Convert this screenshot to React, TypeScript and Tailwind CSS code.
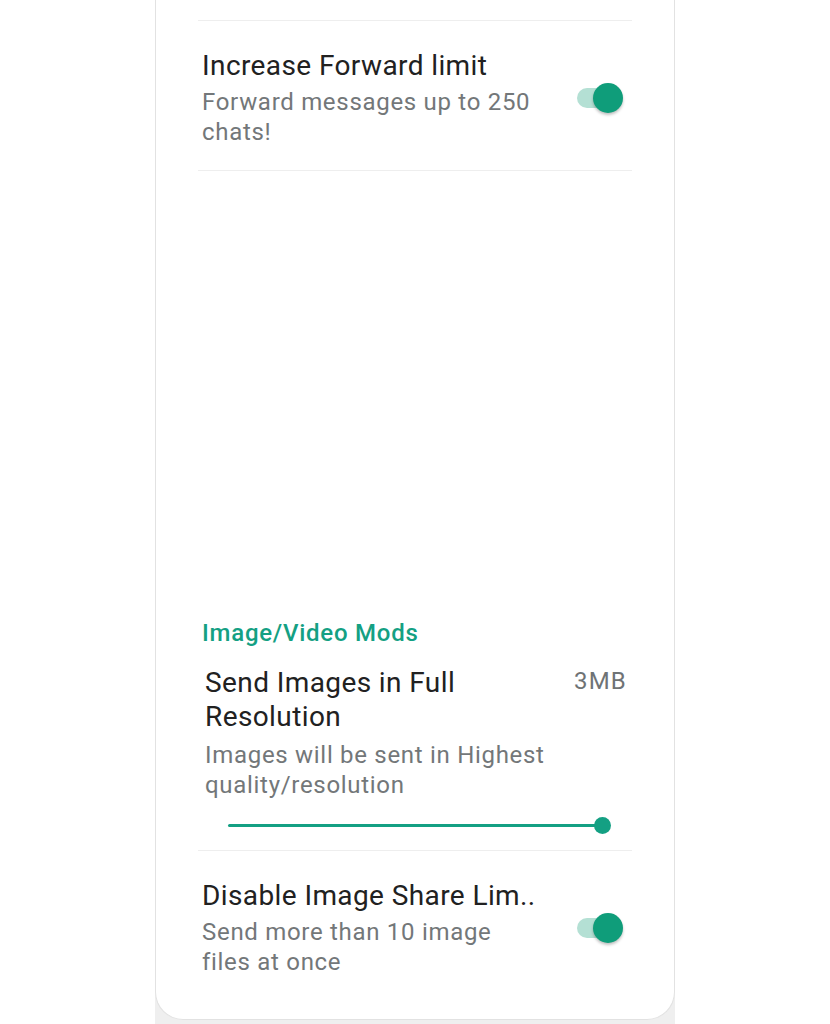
import React from 'react';

const font = { fontFamily: 'Roboto, "Noto Sans", sans-serif' };

function Toggle() {
  return (
    <div className="relative w-[46px] h-[32px] flex items-center shrink-0">
      <div className="w-[40px] h-[20px] rounded-full bg-[#b4e0d4]" />
      <div className="absolute right-0 top-[1px] w-[30px] h-[30px] rounded-full bg-[#0f9d7a] shadow-[0_2px_3px_rgba(0,0,0,0.25)]" />
    </div>
  );
}

function SwitchRow({ title, lines }: { title: string; lines: string[] }) {
  return (
    <div className="flex items-center justify-between pl-[4px] pr-[9px] pt-[28px] pb-[23px]">
      <div>
        <div className="text-[28px] leading-[34px] tracking-[0.4px] text-[#212121]">{title}</div>
        <div className="mt-[4px] text-[24px] leading-[30px] tracking-[0.7px] text-[#737779]">
          {lines.map((l) => (
            <div key={l}>{l}</div>
          ))}
        </div>
      </div>
      <Toggle />
    </div>
  );
}

export default function App() {
  return (
    <div className="w-full h-[1024px] bg-white overflow-hidden" style={font}>
      <div className="mx-auto w-[520px] h-[1024px] bg-[#efefef]">
        <div className="h-[1020px] bg-white border-x border-b border-[#e2e2e2] rounded-b-[28px] px-[42px] pt-[20px]">
          <div className="h-px bg-[#eeeeee]" />
          <SwitchRow title="Increase Forward limit" lines={['Forward messages up to 250', 'chats!']} />
          <div className="h-px bg-[#eeeeee]" />

          <div className="h-[447px]" />

          <div className="pl-[4px] text-[24px] leading-[30px] tracking-[0.75px] font-medium text-[#14a083]">Image/Video Mods</div>

          <div className="pl-[7px] pr-[5px] mt-[18px]">
            <div className="flex justify-between">
              <div className="text-[28px] leading-[34px] tracking-[0.4px] text-[#212121]">
                <div>Send Images in Full</div>
                <div>Resolution</div>
              </div>
              <div className="text-[24px] leading-[30px] tracking-[1.2px] text-[#6f7375]">3MB</div>
            </div>
            <div className="mt-[6px] text-[24px] leading-[30px] tracking-[0.7px] text-[#737779]">
              <div>Images will be sent in Highest</div>
              <div>quality/resolution</div>
            </div>
          </div>

          <div className="relative h-[50px] flex items-center pl-[30px] pr-[29px]">
            <div className="flex-1 h-[3px] bg-[#14a083] rounded-full" />
            <div className="absolute right-[21px] w-[17px] h-[17px] rounded-full bg-[#14a083]" />
          </div>

          <div className="h-px bg-[#eeeeee]" />
          <SwitchRow title="Disable Image Share Lim.." lines={['Send more than 10 image', 'files at once']} />
        </div>
      </div>
    </div>
  );
}
